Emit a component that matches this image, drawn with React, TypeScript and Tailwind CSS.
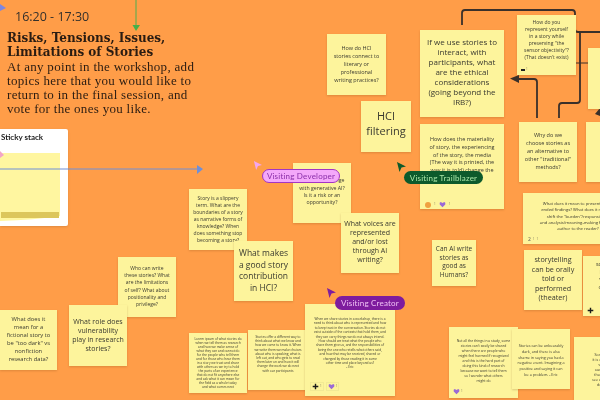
import React from 'react';

type NoteProps = {
  pos: string;
  text: string;
  type: string;
  children?: React.ReactNode;
};

// one sticky on the board, pos holds its place and size
const Note: React.FC<NoteProps> = ({ pos, text, type, children }) => (
  <div className={`absolute ${pos} bg-[#fdf49c] shadow-[0_1px_2px_rgba(120,70,20,0.25)] overflow-hidden`}>
    <p className={`absolute inset-x-0 text-center whitespace-pre-line text-[#3a3a30] ${type}`}>{text}</p>
    {children}
  </div>
);

const Heart = () => (
  <svg viewBox="0 0 10 10" className="w-[7px] h-[7px]">
    <path d="M5 9 1 5V2.500L2.500 1.500 5 3 7.500 1.500 9 2.500V5Z" fill="#9b6ad6" />
  </svg>
);

const Plus = () => (
  <svg viewBox="0 0 10 10" className="w-[7px] h-[7px]">
    <path d="M5 1V9M1 5H9" stroke="#1a1a1a" strokeWidth="2" />
  </svg>
);

const Count = () => <span className="text-[3px] leading-none text-[#77735a]">1</span>;

const Cursor = ({ pos, fill }: { pos: string; fill: string }) => (
  <svg viewBox="0 0 10 10" className={`absolute ${pos}`}>
    <path d="M1 0 10 4.500 5.500 5.500 3.500 10Z" className={fill} />
  </svg>
);

const Label = ({ pos, text, colors }: { pos: string; text: string; colors: string }) => (
  <div className={`absolute ${pos} rounded-full flex items-center justify-center font-['Lato',sans-serif] text-[8px] tracking-[0.2px] leading-none ${colors}`}>
    {text}
  </div>
);

export default function App() {
  return (
    <div className="relative w-[600px] h-[400px] overflow-hidden bg-[#ff9d48] font-['Open_Sans',sans-serif] blur-[0.45px]">
      {/* connectors and arrows */}
      <svg viewBox="0 0 600 400" className="absolute inset-0 w-[600px] h-[400px]" fill="none">
        <path d="M136 0V27" stroke="#4caf50" strokeWidth="1" />
        <path d="M132.500 25H140L136 31Z" fill="#45b049" />
        <path d="M0 169H198" stroke="#6f8fd8" strokeWidth="1" />
        <path d="M197 165 203 169 197 174Z" fill="#6f8fd8" />
        <path d="M0 4 6 8 0 11Z" fill="#7d86e0" />
        <path d="M462 25V13Q462 10 465 10H572Q575 10 575 13V29Q575 32 578 32H600" stroke="#3a302a" strokeWidth="1.800" />
        <path d="M559 118V106Q559 103 562 103H577Q580 103 580 100V32" stroke="#3a302a" strokeWidth="1.800" />
        <path d="M537 118V82Q537 79 534 79H518" stroke="#3a302a" strokeWidth="1.800" />
        <path d="M510 78.500 519 75V83Z" fill="#3a302a" />
        <path d="M574 63H590" stroke="#3a302a" strokeWidth="1" />
        <path d="M595 114 600 108V116Z" fill="#3a302a" />
      </svg>

      {/* session heading */}
      <div className="absolute left-[15px] top-[9px] text-[12.500px] leading-[16px] text-[#33302c]">16:20 - 17:30</div>
      <div className="absolute left-[7px] top-[31px] w-[200px] text-[#2a1c12] leading-[14.300px]">
        <p className="font-['DejaVu_Serif',serif] font-bold text-[12px]">Risks, Tensions, Issues,<br />Limitations of Stories</p>
        <p className="font-['Liberation_Serif',serif] text-[13px] tracking-[0.3px]">At any point in the workshop, add<br />topics here that you would like to<br />return to in the final session, and<br />vote for the ones you like.</p>
      </div>

      {/* sticky stack panel */}
      <div className="absolute left-0 top-[129px] w-[68px] h-[97px] bg-white rounded-r-[2px] shadow-sm">
        <div className="pt-[3px] pl-[1px] font-['Lato',sans-serif] font-bold text-[8px] leading-[11px] text-[#222]">Sticky stack</div>
        <svg viewBox="0 0 68 97" className="absolute inset-0 w-[68px] h-[97px]">
          <path d="M0 24H60V87Q35 91 0 92Z" fill="#fff6a0" />
          <path d="M1 83H59V89H1Z" fill="#dcc65c" />
        </svg>
      </div>
      <svg viewBox="0 0 68 97" className="absolute left-0 top-[129px] w-[68px] h-[97px]" fill="none">
        <path d="M0 40H68" stroke="#6f8fd8" strokeWidth="1" />
        <path d="M0 22 4 26 0 29Z" fill="#f2a5c8" />
      </svg>

      {/* left side of the board */}
      <Note pos="left-0 top-[310px] w-[57px] h-[60px]" text={'What does it\nmean for a\nfictional story to\nbe "too dark" vs\nnonfiction\nresearch data?'} type="top-[5px] text-[5.800px] leading-[8.100px]" />
      <Note pos="left-[118px] top-[257px] w-[58px] h-[60px]" text={'Who can write\nthese stories? What\nare the limitations\nof self? What about\npositionality and\nprivilege?'} type="top-[8px] text-[5px] leading-[7.200px]" />
      <Note pos="left-[69px] top-[305px] w-[58px] h-[61px]" text={'What role does\nvulnerability\nplay in research\nstories?'} type="top-[12px] text-[7px] leading-[9px]" />
      <Note pos="left-[189px] top-[189px] w-[58px] h-[61px]" text={'Story is a slippery\nterm. What are the\nboundaries of a story\nas narrative forms of\nknowledge? When\ndoes something stop\nbecoming a story?'} type="top-[6px] text-[5px] leading-[7px]" />
      <Note pos="left-[234px] top-[241px] w-[59px] h-[60px]" text={'What makes\na good story\ncontribution\nin HCI?'} type="top-[6px] text-[8.500px] leading-[11.700px]" />
      <Note pos="left-[189px] top-[333px] w-[58px] h-[60px]" text={'Lorem ipsum of what stories do\nwhen we tell them as research\nand how we make sense of\nwhat they can and cannot do\nfor the people who tell them\nand for those who hear them\nin a story we trust and share\nwith others as we try to hold\nthe parts of an experience\nthat do not fit anywhere else\nand ask what it can mean for\nthe field as a whole today\nand what comes next'} type="top-[4px] text-[3.200px] leading-[4px]" />
      <Note pos="left-[248px] top-[330px] w-[60px] h-[60px]" text={'Stories offer a different way to\nthink about what we know and\nhow we come to know it. When\nwe write them we make choices\nabout who is speaking, what is\nleft out, and who gets to read\nthem later on and how it will\nchange the work we do next\nwith our participants'} type="top-[5px] text-[3.200px] leading-[4.200px]" />

      {/* middle of the board */}
      <Note pos="left-[327px] top-[34px] w-[59px] h-[61px]" text={'How do HCI\nstories connect to\nliterary or\nprofessional\nwriting practices?'} type="top-[10px] text-[5.500px] leading-[8px]" />
      <Note pos="left-[361px] top-[101px] w-[50px] h-[51px]" text={'HCI\nfiltering'} type="top-[7px] text-[11px] leading-[15px]" />
      <Note pos="left-[420px] top-[30px] w-[84px] h-[87px]" text={'If we use stories to\ninteract, with\nparticipants, what\nare the ethical\nconsiderations\n(going beyond the\nIRB?)'} type="top-[7px] text-[8px] leading-[10px]" />
      <Note pos="left-[420px] top-[124px] w-[84px] h-[85px]" text={'How does the materiality\nof story, the experiencing\nof the story, the media\n(The way it is printed, the\nway it is told) change the'} type="top-[12px] text-[5.500px] leading-[7.800px]">
        <div className="absolute left-[5px] bottom-[1px] flex items-center gap-[3px]">
          <span className="w-[6px] h-[6px] rounded-full bg-[#f0a040]" />
          <Count />
          <Heart />
          <Count />
        </div>
      </Note>
      <Note pos="left-[293px] top-[163px] w-[58px] h-[60px]" text={'How does\nknowledge change\nwith generative AI?\nIs it a risk or an\nopportunity?'} type="top-[7px] text-[5.200px] leading-[7.300px]" />
      <Note pos="left-[341px] top-[213px] w-[58px] h-[60px]" text={'What voices are\nrepresented\nand/or lost\nthrough AI\nwriting?'} type="top-[7px] text-[7px] leading-[8.900px]" />
      <Note pos="left-[432px] top-[240px] w-[44px] h-[46px]" text={'Can AI write\nstories as\ngood as\nHumans?'} type="top-[5px] text-[6.500px] leading-[8.700px]" />
      <Note pos="left-[305px] top-[304px] w-[90px] h-[92px]" text={'When we share stories in a workshop, there is a\nneed to think about who is represented and how\nto keep trust in the conversation. Stories do not\nexist outside of the contexts that hold them, and\nthey can carry things we do not always intend.\nHow should we treat what the people who\nshare them give us, and the responsibilities of\nbeing the one who retells what others said,\nand how that may be received, shared or\nchanged by those reading it in some\nother time and place beyond us?\n- Eric'} type="top-[13px] text-[3.200px] leading-[4.400px]">
        <div className="absolute left-[5px] bottom-[5px] flex items-center gap-[2px]">
          <div className="flex items-center gap-[1px] border border-[#f2ea95] px-[1px]"><Plus /><Count /></div>
          <div className="flex items-center gap-[1px] border border-[#f2ea95] px-[1px]"><Heart /><Count /></div>
        </div>
      </Note>

      {/* right side of the board */}
      <Note pos="left-[517px] top-[15px] w-[59px] h-[60px]" text={'How do you\nrepresent yourself\nin a story while\npreserving "the\nsensor objectivity"?\n(That doesn\'t exist)'} type="top-[4px] text-[5px] leading-[7px]">
        <div className="absolute left-[4px] bottom-[4px] flex items-center gap-[1px]"><span className="w-[4px] h-[2px] bg-[#222]" /><Count /></div>
      </Note>
      <Note pos="left-[588px] top-[48px] w-[59px] h-[61px]" text={'How do\nwe use\nSDGs'} type="top-[7px] text-[6.500px] leading-[11px]" />
      <Note pos="left-[519px] top-[122px] w-[58px] h-[60px]" text={'Why do we\nchoose stories as\nan alternative to\nother "traditional"\nmethods?'} type="top-[9px] text-[5.500px] leading-[8px]" />
      <Note pos="left-[586px] top-[122px] w-[58px] h-[60px]" text={'examples\nwhere we\ncan'} type="top-[16px] text-[5.500px] leading-[8px]" />
      <Note pos="left-[523px] top-[193px] w-[110px] h-[51px]" text={'What does it mean to present open-\nended findings? What does it mean to\nshift the "burden"/responsibility\nand analysis/meaning-making from the\nauthor to the reader?'} type="top-[8px] text-[4.200px] leading-[6.300px]">
        <div className="absolute left-[5px] bottom-[2px] flex items-center gap-[2px] text-[5px] leading-none text-[#555]"><span>2</span><Count /><Count /></div>
      </Note>
      <Note pos="left-[524px] top-[250px] w-[58px] h-[60px]" text={'storytelling\ncan be orally\ntold or\nperformed\n(theater)'} type="top-[5px] text-[7.200px] leading-[9.600px]" />
      <Note pos="left-[583px] top-[256px] w-[40px] h-[60px]" text={'some\nlac\nvul\ncan\nin'} type="top-[5px] text-[5.500px] leading-[7.500px]">
        <div className="absolute left-[4px] bottom-[2px]"><Plus /></div>
      </Note>
      <Note pos="left-[449px] top-[327px] w-[69px] h-[71px]" text={"Not all the things in a study, some\nstories can't easily be shared\nwhen there are people who\nmight feel harmed if recognized\nand this is the hard part of\ndoing this kind of research\nbecause we want to tell them\nso I wonder what others\nmight do"} type="top-[11px] text-[3.400px] leading-[5px]">
        <div className="absolute left-[4px] bottom-[3px] flex items-center gap-[1px]"><Heart /><Count /></div>
      </Note>
      <Note pos="left-[512px] top-[329px] w-[58px] h-[60px]" text={'Stories can be unbearably\ndark, and there is also\nshame in saying you had a\nnegative event. Imagining a\npositive and saying it can\nbe a problem. - Eric'} type="top-[14px] text-[3.700px] leading-[5.800px]" />
      <Note pos="left-[574px] top-[337px] w-[60px] h-[63px]" text={'Sometimes\nit is only after\nwe tell\nour stories\nthat we can\nsee what they\ndo to us'} type="top-[15px] text-[3.700px] leading-[5px]" />

      {/* collaborators */}
      <Cursor pos="left-[253px] top-[161px] w-[9px] h-[9px]" fill="fill-[#f4a6f0]" />
      <Label pos="left-[262px] top-[169px] w-[78px] h-[14px] bg-[#f4a8fa] border border-[#a335c4]" text="Visiting Developer" colors="text-[#8a2ea8]" />
      <Cursor pos="left-[396px] top-[162px] w-[10px] h-[10px]" fill="fill-[#0f5a2a]" />
      <Label pos="left-[404px] top-[171px] w-[79px] h-[13px] bg-[#0d5a2c]" text="Visiting Trailblazer" colors="text-[#a9e6a8]" />
      <Cursor pos="left-[326px] top-[288px] w-[10px] h-[10px]" fill="fill-[#7e1c9e]" />
      <Label pos="left-[335px] top-[296px] w-[70px] h-[14px] bg-[#7e1c9e]" text="Visiting Creator" colors="text-[#f0c0f5]" />
    </div>
  );
}
